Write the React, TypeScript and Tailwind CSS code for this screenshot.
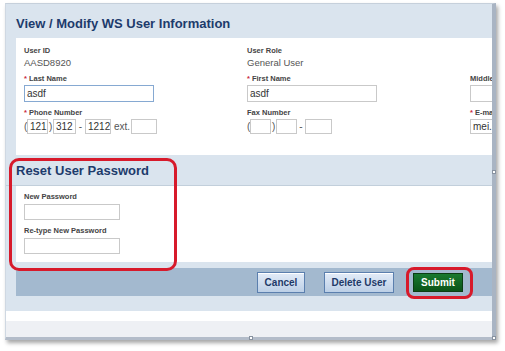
import React from "react";

const font = { fontFamily: '"Liberation Sans", Arial, sans-serif' };

function Label({ text, req }: { text: string; req?: boolean }) {
  return (
    <div className="text-[7.5px] leading-[9px] font-bold text-[#444] whitespace-nowrap">
      {req && <span className="text-[#c8283a] mr-[2px]">*</span>}
      {text}
    </div>
  );
}

function Box({ w, h = 15, value = "", focus = false }: { w: number; h?: number; value?: string; focus?: boolean }) {
  return (
    <div
      className={`shrink-0 bg-white border text-[10px] text-[#333] pl-[2px] flex items-center overflow-hidden whitespace-nowrap ${
        focus ? "border-[#86a9d2]" : "border-[#c9c9c9]"
      }`}
      style={{ width: w, height: h }}
    >
      {value}
    </div>
  );
}

function Btn({ children, w }: { children: React.ReactNode; w: number }) {
  return (
    <button
      className="h-[21px] border border-[#5b7fae] bg-gradient-to-b from-[#e3ecf8] to-[#bccfe6] text-[10px] font-bold text-[#1f3a68] shadow-[inset_0_1px_0_#fff]"
      style={{ width: w }}
    >
      {children}
    </button>
  );
}

export default function App() {
  return (
    <div className="w-[505px] h-[351px] bg-white relative overflow-hidden pt-[3px] pl-[5px]" style={font}>
      {/* window */}
      <div className="relative w-[491px] h-[337px] flex flex-col bg-[#dae4ee] border-l border-l-[#cfd8e2] border-t border-t-[#c6d0db] border-r-4 border-r-[#a9b4c3] border-b-[3px] border-b-[#b3bcc9] shadow-[2px_3px_4px_rgba(0,0,0,0.35)]">
        <div className="h-[34px] pl-[10px] pt-[12px] shrink-0">
          <h1 className="text-[13px] leading-[15px] font-bold text-[#1d3b6c]">View / Modify WS User Information</h1>
        </div>

        {/* user info */}
        <div className="ml-[10px] h-[117px] shrink-0 bg-white pl-[8px] pt-[8px] overflow-hidden grid content-start grid-cols-[223px_223px_60px]">
          <div>
            <Label text="User ID" />
            <div className="mt-[2px] text-[9.5px] leading-[12px] text-[#555]">AASD8920</div>
          </div>
          <div>
            <Label text="User Role" />
            <div className="mt-[2px] text-[9.5px] leading-[12px] text-[#555]">General User</div>
          </div>
          <div />

          <div className="mt-[5px]">
            <Label text="Last Name" req />
            <div className="mt-[2px]">
              <Box w={130} h={17} value="asdf" focus />
            </div>
          </div>
          <div className="mt-[5px]">
            <Label text="First Name" req />
            <div className="mt-[2px]">
              <Box w={130} h={17} value="asdf" />
            </div>
          </div>
          <div className="mt-[5px]">
            <Label text="Middle" />
            <div className="mt-[2px]">
              <Box w={40} h={17} />
            </div>
          </div>

          <div className="mt-[6px]">
            <Label text="Phone Number" req />
            <div className="mt-[2px] flex items-center text-[10px] text-[#555]">
              <span className="w-[3px]">(</span>
              <Box w={21} value="121" />
              <span className="w-[5px] pl-[1px]">)</span>
              <Box w={23} value="312" />
              <span className="w-[9px] text-center">-</span>
              <Box w={26} value="1212" />
              <span className="w-[20px] pl-[3px]">ext.</span>
              <Box w={26} />
            </div>
          </div>
          <div className="mt-[6px]">
            <Label text="Fax Number" />
            <div className="mt-[2px] flex items-center text-[10px] text-[#555]">
              <span className="w-[3px]">(</span>
              <Box w={21} />
              <span className="w-[5px] pl-[1px]">)</span>
              <Box w={21} />
              <span className="w-[8px] text-center">-</span>
              <Box w={27} />
            </div>
          </div>
          <div className="mt-[6px]">
            <Label text="E-mail" req />
            <div className="mt-[2px]">
              <Box w={60} value="mei.smith" />
            </div>
          </div>
        </div>

        {/* reset header */}
        <div className="h-[31px] shrink-0 border-b border-[#c2cfdb] pl-[10px] flex items-center">
          <h2 className="text-[13px] leading-[15px] font-bold text-[#1d3b6c]">Reset User Password</h2>
        </div>

        <div className="ml-[10px] h-[76px] shrink-0 bg-white pl-[8px] pt-[6px]">
          <Label text="New Password" />
          <div className="mt-[3px]">
            <Box w={96} h={16} />
          </div>
          <div className="mt-[6px]">
            <Label text="Re-type New Password" />
          </div>
          <div className="mt-[3px]">
            <Box w={96} h={16} />
          </div>
        </div>

        <div className="h-[6px] shrink-0" />

        {/* button bar */}
        <div className="ml-[10px] h-[28px] shrink-0 bg-[#a3b9cf] flex items-center justify-end gap-[19px] pr-[29px]">
          <Btn w={48}>Cancel</Btn>
          <Btn w={70}>Delete User</Btn>
          <button className="w-[50px] h-[19px] border border-[#0b3d14] bg-gradient-to-b from-[#1a7a30] to-[#0a5418] text-[10px] font-bold text-white">
            Submit
          </button>
        </div>

        <div className="h-[15px] shrink-0" />
        <div className="h-[10px] shrink-0 bg-white" />
        <div className="flex-1 bg-[#eef0f4]" />

        {/* resize handles */}
        <div className="absolute right-[-4px] top-[166px] w-[4px] h-[4px] bg-white border border-[#8892a0]" />
        <div className="absolute left-[243px] bottom-[-3px] w-[4px] h-[4px] bg-white border border-[#8892a0]" />
        <div className="absolute right-[-4px] bottom-[-3px] w-[4px] h-[4px] bg-white border border-[#8892a0]" />
      </div>

      {/* red highlight annotations */}
      <div className="absolute left-[9px] top-[158px] w-[168px] h-[113px] border-[3.5px] border-[#d71a2b] rounded-[10px]" />
      <div className="absolute left-[406px] top-[267px] w-[67px] h-[32px] border-[3.5px] border-[#d71a2b] rounded-[8px]" />
    </div>
  );
}
